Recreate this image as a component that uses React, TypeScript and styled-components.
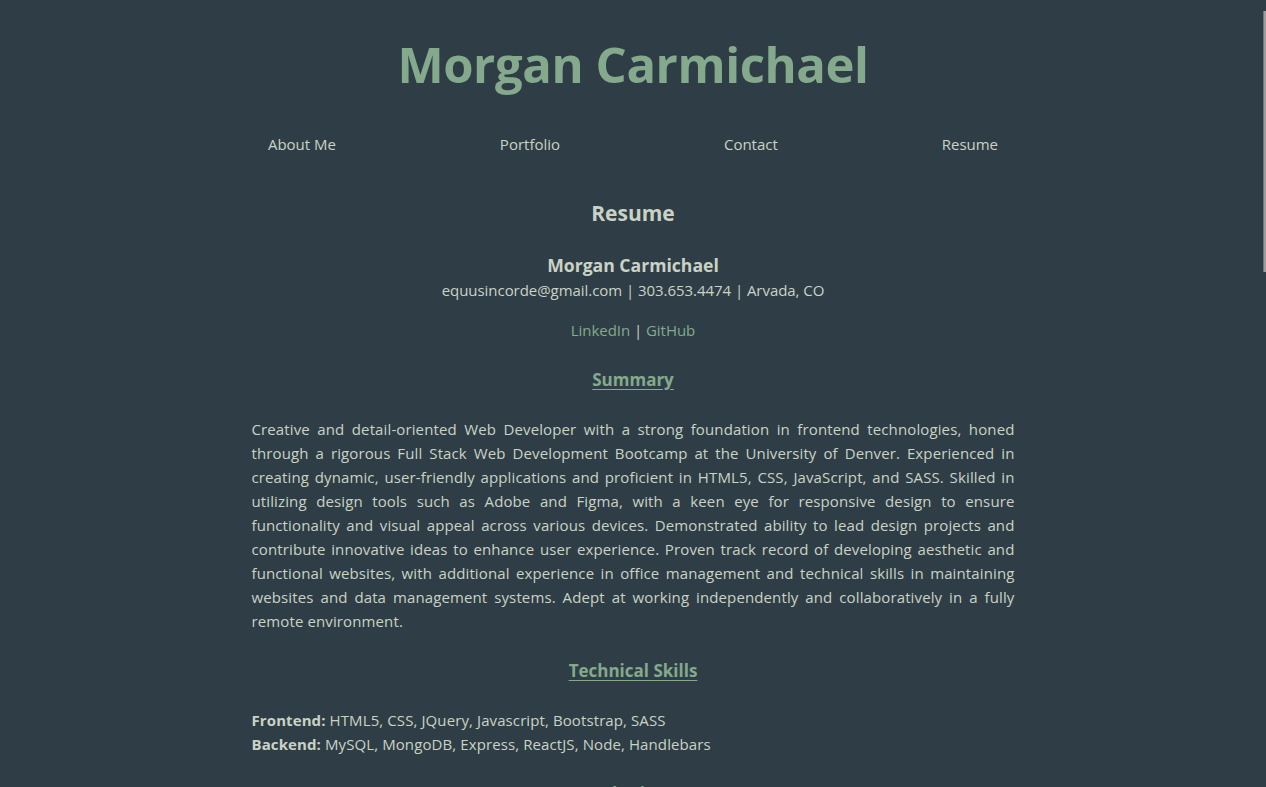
import React from "react";
import styled, { createGlobalStyle } from "styled-components";

const GlobalStyle = createGlobalStyle`
  html, body {
    margin: 0;
    padding: 0;
    background: #2f3e46;
  }
  body {
    font-family: "Open Sans", "Noto Sans", "Liberation Sans", sans-serif;
    color: #cad2c5;
  }
  html { scrollbar-width: none; }
  ::-webkit-scrollbar { width: 0; height: 0; }
`;

const ScrollThumb = styled.div`
  position: fixed;
  top: 11px;
  right: 0;
  width: 2px;
  height: 261px;
  background: #9d9d9d;
  border-left: 1px solid #6f7678;
`;

const Page = styled.div`
  display: flex;
  flex-direction: column;
  align-items: center;
  padding: 33px 0 120px;
`;

const Title = styled.h1`
  margin: 0;
  font-size: 49px;
  line-height: 62px;
  font-weight: 700;
  color: #84a98c;
  letter-spacing: -0.4px;
`;

const Nav = styled.nav`
  display: flex;
  justify-content: space-around;
  width: 894px;
  margin-top: 38px;
`;

const NavLink = styled.a`
  color: #cad2c5;
  text-decoration: none;
  font-size: 15px;
  line-height: 22px;
`;

const Main = styled.main`
  width: 763px;
  display: flex;
  flex-direction: column;
  align-items: center;
  margin-top: 43px;
`;

const PageHeading = styled.h2`
  margin: 0;
  font-size: 21px;
  line-height: 30px;
  font-weight: 700;
`;

const Name = styled.h3`
  margin: 24px 0 0;
  font-size: 17.6px;
  line-height: 26px;
  font-weight: 700;
`;

const Line = styled.p<{ $gap?: number }>`
  margin: ${(p) => p.$gap ?? 0}px 0 0;
  font-size: 15px;
  line-height: 24px;
  text-align: center;
  letter-spacing: -0.05px;
`;

const ExtLink = styled.a`
  color: #84a98c;
  text-decoration: none;
`;

const SectionTitle = styled.h4`
  margin: 26px 0 0;
  font-size: 17px;
  line-height: 24px;
  font-weight: 700;
  color: #84a98c;
  text-decoration: underline;
  text-underline-offset: 3px;
`;

const Paragraph = styled.p`
  align-self: stretch;
  margin: 25px 0 0;
  font-size: 15px;
  line-height: 24px;
  text-align: justify;
  letter-spacing: 0.12px;
`;

const SkillList = styled.div`
  align-self: stretch;
  margin-top: 25px;
  font-size: 15px;
  line-height: 24px;
  letter-spacing: 0.1px;
`;

const SkillRow = styled.div``;

const Label = styled.strong`
  font-weight: 700;
`;

const Job = styled.div`
  align-self: stretch;
  margin-top: 26px;
  font-size: 15px;
  line-height: 24px;
`;

const JobList = styled.ul`
  margin: 4px 0 0;
  padding-left: 24px;
`;

const jobs = [
  {
    title: "Web Developer",
    place: "Freelance | Remote",
    dates: "2023 – Present",
    items: [
      "Designed and developed responsive websites for small businesses using HTML5, CSS, JavaScript and React.",
      "Collaborated with clients to translate requirements into functional, accessible user interfaces.",
      "Maintained and updated existing websites, improving performance and visual consistency.",
    ],
  },
  {
    title: "Office Manager",
    place: "Arvada, CO",
    dates: "2016 – 2023",
    items: [
      "Managed daily office operations, scheduling, and vendor relations.",
      "Maintained the company website and internal data management systems.",
      "Provided technical support and trained staff on software tools.",
    ],
  },
];

export default function App() {
  return (
    <>
      <GlobalStyle />
      <ScrollThumb />
      <Page>
        <Title>Morgan Carmichael</Title>
        <Nav>
          <NavLink href="#about">About Me</NavLink>
          <NavLink href="#portfolio">Portfolio</NavLink>
          <NavLink href="#contact">Contact</NavLink>
          <NavLink href="#resume">Resume</NavLink>
        </Nav>
        <Main>
          <PageHeading>Resume</PageHeading>
          <Name>Morgan Carmichael</Name>
          <Line>equusincorde@gmail.com | 303.653.4474 | Arvada, CO</Line>
          <Line $gap={16}>
            <ExtLink href="#linkedin">LinkedIn</ExtLink> | <ExtLink href="#github">GitHub</ExtLink>
          </Line>
          <SectionTitle>Summary</SectionTitle>
          <Paragraph>
            Creative and detail-oriented Web Developer with a strong foundation in frontend technologies, honed
            through a rigorous Full Stack Web Development Bootcamp at the University of Denver. Experienced in
            creating dynamic, user-friendly applications and proficient in HTML5, CSS, JavaScript, and SASS. Skilled in
            utilizing design tools such as Adobe and Figma, with a keen eye for responsive design to ensure
            functionality and visual appeal across various devices. Demonstrated ability to lead design projects and
            contribute innovative ideas to enhance user experience. Proven track record of developing aesthetic and
            functional websites, with additional experience in office management and technical skills in maintaining
            websites and data management systems. Adept at working independently and collaboratively in a fully
            remote environment.
          </Paragraph>
          <SectionTitle>Technical Skills</SectionTitle>
          <SkillList>
            <SkillRow>
              <Label>Frontend:</Label> HTML5, CSS, JQuery, Javascript, Bootstrap, SASS
            </SkillRow>
            <SkillRow>
              <Label>Backend:</Label> MySQL, MongoDB, Express, ReactJS, Node, Handlebars
            </SkillRow>
          </SkillList>
          <SectionTitle>Work History</SectionTitle>
          {jobs.map((j) => (
            <Job key={j.title}>
              <Label>{j.title}</Label> | {j.place} | {j.dates}
              <JobList>
                {j.items.map((it) => (
                  <li key={it}>{it}</li>
                ))}
              </JobList>
            </Job>
          ))}
          <SectionTitle>Education</SectionTitle>
          <Job>
            <Label>University of Denver</Label> | Full Stack Web Development Bootcamp | 2023
          </Job>
        </Main>
      </Page>
    </>
  );
}
